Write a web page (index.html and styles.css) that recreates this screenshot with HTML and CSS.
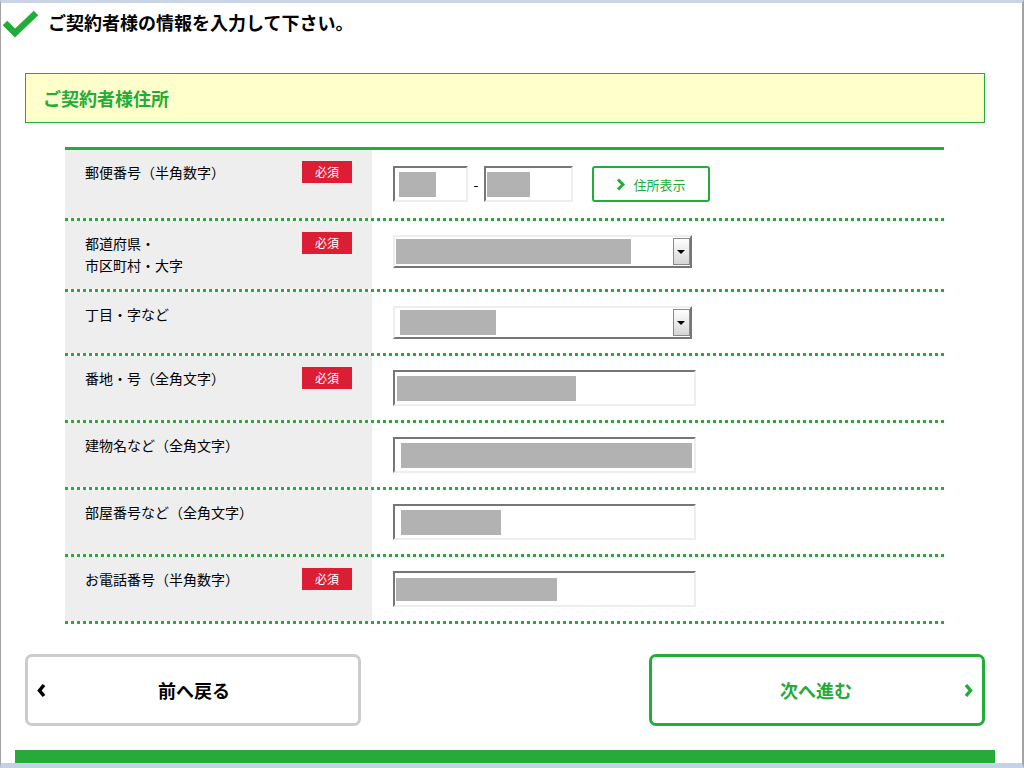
FILE: index.html
```html
<!DOCTYPE html>
<html lang="ja">
<head>
<meta charset="utf-8" />
<title>ご契約者様の情報入力</title>
<link rel="stylesheet" href="styles.css">
</head>
<body>
<div class="frame">
  <div class="page-title">
    <svg class="check" width="38" height="32" viewBox="0 0 38 32">
      <polyline points="3,15 13,25 34,5" fill="none" stroke="#22ac38" stroke-width="6.5" />
    </svg>
    <h1>ご契約者様の情報を入力して下さい。</h1>
  </div>

  <div class="container">
    <h2 class="section-head">ご契約者様住所</h2>

    <div class="form-table">
      <div class="row row-zip">
        <div class="label"><span>郵便番号（半角数字）</span><em class="required">必須</em></div>
        <div class="value">
          <div class="field zip1"><span class="mask" style="width:37px"></span></div>
          <span class="dash">-</span>
          <div class="field zip2"><span class="mask" style="width:43px"></span></div>
          <a class="btn-address" href="#">
            <svg width="9" height="13" viewBox="0 0 9 13"><polyline points="2,1.5 7,6.5 2,11.5" fill="none" stroke="#22ac38" stroke-width="3" /></svg>
            住所表示
          </a>
        </div>
      </div>

      <div class="row">
        <div class="label"><span>都道府県・<br>市区町村・大字</span><em class="required">必須</em></div>
        <div class="value">
          <div class="select"><span class="mask" style="width:235px"></span><i class="arrow"></i></div>
        </div>
      </div>

      <div class="row">
        <div class="label"><span>丁目・字など</span></div>
        <div class="value">
          <div class="select"><span class="mask mask-in" style="width:96px"></span><i class="arrow"></i></div>
        </div>
      </div>

      <div class="row">
        <div class="label"><span>番地・号（全角文字）</span><em class="required">必須</em></div>
        <div class="value">
          <div class="field wide"><span class="mask" style="width:179px"></span></div>
        </div>
      </div>

      <div class="row">
        <div class="label"><span>建物名など（全角文字）</span></div>
        <div class="value">
          <div class="field wide"><span class="mask mask-in" style="width:291px"></span></div>
        </div>
      </div>

      <div class="row">
        <div class="label"><span>部屋番号など（全角文字）</span></div>
        <div class="value">
          <div class="field wide"><span class="mask mask-in" style="width:100px"></span></div>
        </div>
      </div>

      <div class="row">
        <div class="label"><span>お電話番号（半角数字）</span><em class="required">必須</em></div>
        <div class="value">
          <div class="field wide"><span class="mask mask-edge" style="width:161px"></span></div>
        </div>
      </div>
    </div>

    <div class="nav">
      <a class="nav-btn back" href="#">
        <svg width="11" height="15" viewBox="0 0 11 15"><polyline points="8,2 3.5,7.5 8,13" fill="none" stroke="#000" stroke-width="3.5" /></svg>
        <span>前へ戻る</span>
        <i></i>
      </a>
      <a class="nav-btn next" href="#">
        <i></i>
        <span>次へ進む</span>
        <svg width="11" height="15" viewBox="0 0 11 15"><polyline points="3,2 7.5,7.5 3,13" fill="none" stroke="#22ac38" stroke-width="3.5" /></svg>
      </a>
    </div>

    <div class="bottom-bar"></div>
  </div>
</div>
</body>
</html>
```

FILE: styles.css
```css
* {
  box-sizing: border-box;
  margin: 0;
  padding: 0;
}
body {
  background: #fff;
  color: #000;
  font-family: 'Noto Sans CJK JP', 'Noto Sans', sans-serif;
}
a {
  text-decoration: none;
}
.frame {
  border-top: 3px solid #c9d5e5;
  border-left: 1px solid #a3a3a3;
  border-right: 2px solid #a3a3a3;
  border-bottom: 5px solid #c4d2e8;
  height: 768px;
  overflow: hidden;
}
.page-title {
  align-items: center;
  display: flex;
  height: 38px;
  padding-left: 1px;
}
.page-title .check {
  margin-top: 4px;
}
.page-title h1 {
  font-size: 18px;
  font-weight: bold;
  margin-left: 8px;
}
.container {
  margin-left: 14px;
  width: 980px;
}
.section-head {
  align-items: center;
  background: #ffffcc;
  border: 1px solid #22ac38;
  color: #22ac38;
  display: flex;
  font-size: 18px;
  font-weight: bold;
  height: 50px;
  margin: 32px 10px 0;
  padding-left: 17px;
}
.form-table {
  border-top: 3px solid #22ac38;
  margin: 24px 51px 0 50px;
}
.row {
  background: repeating-linear-gradient(to right, #22ac38 0 3px, transparent 3px 6px) left bottom / 100% 3px no-repeat;
  display: grid;
  grid-template-columns: 307px 1fr;
  padding-bottom: 3px;
}
.label {
  align-items: flex-start;
  background: #eeeeee;
  display: flex;
  font-size: 14px;
  justify-content: space-between;
  line-height: 22px;
  padding: 11px 20px 13px;
}
.required {
  background: #dc1e35;
  color: #fff;
  font-size: 12px;
  font-style: normal;
  height: 22px;
  line-height: 22px;
  text-align: center;
  width: 50px;
}
.value {
  align-items: flex-start;
  display: flex;
  padding: 14px 20px 14px 21px;
}
.row-zip .value {
  padding-top: 16px;
  padding-bottom: 16px;
}
.field {
  align-items: center;
  background: #fff;
  border: 2px solid;
  border-color: #767676 #eeeeee #eeeeee #767676;
  display: flex;
  height: 36px;
  padding: 0 2px;
}
.field.zip1 {
  padding-left: 4px;
  width: 75px;
}
.field.zip2 {
  padding-left: 1px;
  width: 89px;
}
.field.wide {
  width: 303px;
}
.mask {
  background: #b2b2b2;
  display: block;
  height: 25px;
}
.mask-in {
  margin-left: 4px;
}
.mask-edge {
  margin-left: -1px;
  height: 23px;
}
.dash {
  font-size: 14px;
  line-height: 36px;
  text-align: center;
  width: 16px;
}
.btn-address {
  align-items: center;
  border: 2px solid #22ac38;
  border-radius: 3px;
  color: #22ac38;
  display: flex;
  font-size: 13px;
  gap: 8px;
  height: 36px;
  justify-content: center;
  margin-left: 19px;
  width: 118px;
}
.select {
  align-items: center;
  background: #fff;
  border: 2px solid;
  border-color: #eeeeee #767676 #767676 #eeeeee;
  display: flex;
  height: 33px;
  justify-content: space-between;
  padding-left: 1px;
  width: 299px;
}
.select .arrow {
  align-self: stretch;
  background: linear-gradient(#ffffff, #d6d6d6);
  border: 1px solid #8a8a8a;
  margin: 1px 0;
  position: relative;
  width: 17px;
}
.select .arrow::after {
  border-left: 4px solid transparent;
  border-right: 4px solid transparent;
  border-top: 4px solid #000;
  content: '';
  left: 3px;
  position: absolute;
  top: 11px;
}
.nav {
  display: flex;
  justify-content: space-between;
  margin-top: 30px;
  padding: 0 10px;
}
.nav-btn {
  align-items: center;
  border: 3px solid #cccccc;
  border-radius: 7px;
  color: #000;
  display: grid;
  font-size: 18px;
  font-weight: bold;
  grid-template-columns: 20px 1fr 20px;
  height: 72px;
  padding: 0 6px 0 8px;
  width: 336px;
}
.nav-btn span {
  text-align: center;
}
.nav-btn.next {
  border-color: #22ac38;
  color: #22ac38;
  padding: 0 8px 0 6px;
}
.nav-btn.next svg {
  justify-self: end;
}
.bottom-bar {
  background: #26ab3a;
  height: 13px;
  margin-top: 24px;
}
```
